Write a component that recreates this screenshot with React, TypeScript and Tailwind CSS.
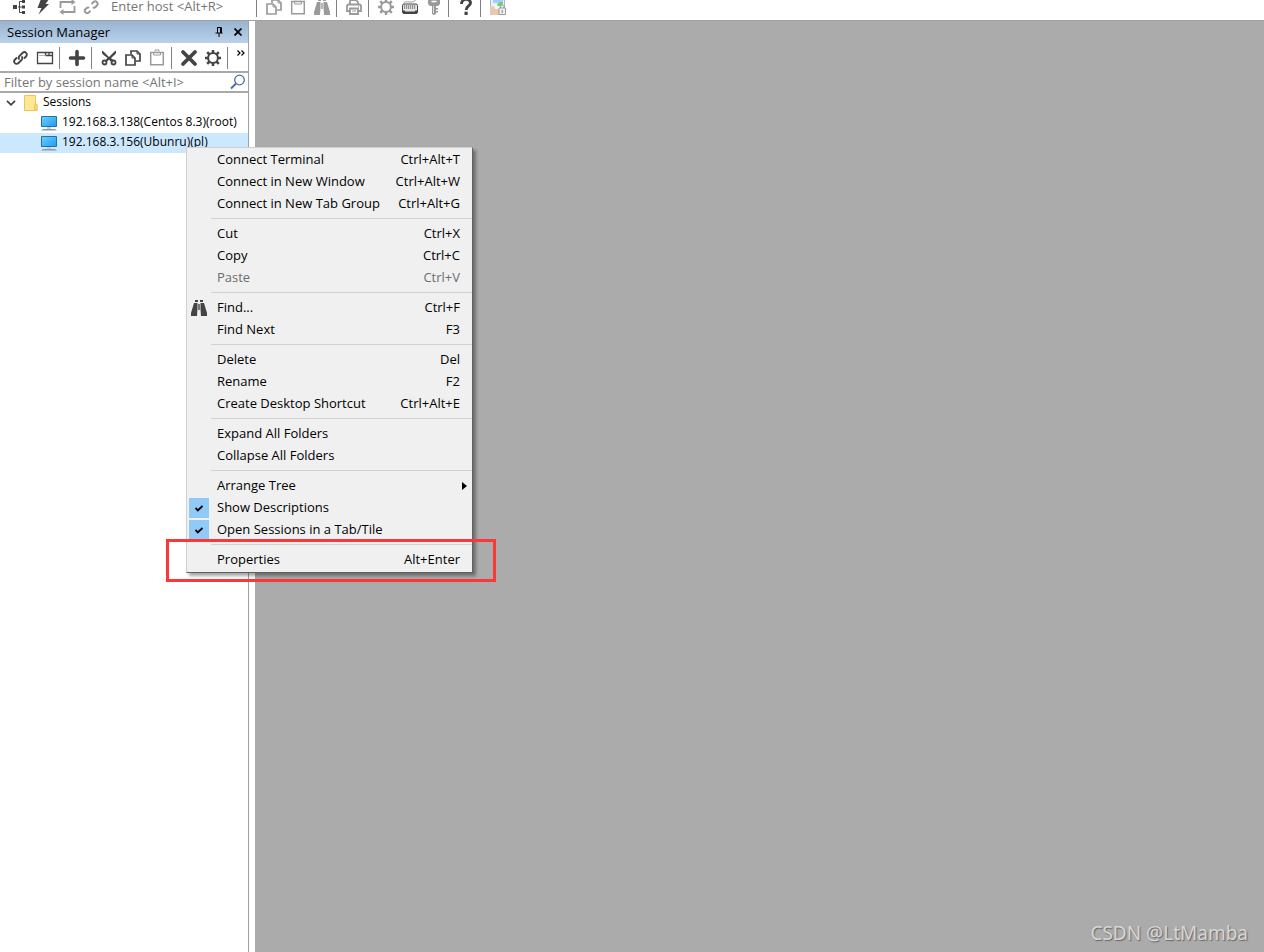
import type { ReactNode } from "react";

const DARK = "#444444";
const PALE = "#9a9a9a";

type IconProps = { color?: string };

function Glyph({ children }: { children: ReactNode }) {
  return (
    <svg viewBox="0 0 16 16" className="h-4 w-4 overflow-visible" fill="none" aria-hidden="true">
      {children}
    </svg>
  );
}

function TreeIcon() {
  return (
    <Glyph>
      <path d="M2 6h4v4H2zM11 1h3v3h-3zM11 6.500h3v3h-3zM11 12h3v3h-3z" fill={DARK} />
      <path d="M7 8h4M11 2.500H8.500v11H11" stroke={DARK} strokeWidth="1" />
    </Glyph>
  );
}

function BoltIcon() {
  return (
    <Glyph>
      <path d="M6 0h8L10.500 5H14L3.500 15.500 6.500 9H2.500z" fill={DARK} />
    </Glyph>
  );
}

function LoopIcon() {
  return (
    <Glyph>
      <path d="M1.500 9V3h12M15.500 7v6h-12" stroke={PALE} strokeWidth="1.800" />
      <path d="M12.500 0L16.500 3l-4 3zM4.500 10L.5 13l4 3z" fill={PALE} />
    </Glyph>
  );
}

function BrokenLinkIcon() {
  return (
    <Glyph>
      <path
        d="M8.500 5L10.500 3c2.200-2 5.500 1 3.500 3.500L12.500 8c-.8.800-1.800.8-2.800.3M6.300 8.700c-1-.5-2-.3-2.800.5L2.200 10.500C.5 12.500 3.800 15.500 5.800 13.500L7.500 11.800"
        stroke={PALE}
        strokeWidth="2"
      />
    </Glyph>
  );
}

function LinkIcon() {
  return (
    <Glyph>
      <path
        d="M6.500 9.500c-1-1-1-2.500 0-3.500l3-3c2.500-2.500 6 1 3.500 3.500l-2 2M8.500 6.500c1.200 1 1.200 2.500 0 3.500l-3 3c-2.500 2.500-6-1-3.500-3.500l2-2"
        stroke={DARK}
        strokeWidth="1.800"
      />
    </Glyph>
  );
}

function WindowIcon() {
  return (
    <Glyph>
      <path d="M.5 2.500h15v11H.5zM8.500 5.500h7M8.500 2.500v3M12 2.500v3" stroke={DARK} strokeWidth="1.300" />
      <path d="M2 5.500h6.500" stroke="#b5b5b5" />
    </Glyph>
  );
}

function PlusIcon() {
  return (
    <Glyph>
      <path d="M8 1.500v13M1.500 8h13" stroke={DARK} strokeWidth="3.600" strokeLinecap="round" />
    </Glyph>
  );
}

function CutIcon() {
  return (
    <Glyph>
      <path d="M1.500.5L8 7l6.500-6.500c1 1.500.5 3-.5 4L5.500 12 4 10.500 6.500 8 2 4.500C1 3.500.5 2 1.500.5z" fill={DARK} />
      <path d="M8 8l4 3.500" stroke={DARK} strokeWidth="2.500" />
      <circle cx="3.500" cy="12.500" r="2" stroke={DARK} strokeWidth="1.800" />
      <circle cx="12.500" cy="12.500" r="2" stroke={DARK} strokeWidth="1.800" />
    </Glyph>
  );
}

function CopyIcon({ color = PALE }: IconProps) {
  return (
    <Glyph>
      <path d="M6 4V1h6l3 3v7h-4" stroke={color} strokeWidth="1.700" />
      <path d="M12 1v3h3" stroke={color} />
      <path d="M1 5h6l3 3v7H1z" stroke={color} strokeWidth="1.700" />
      <path d="M7 5v3h3" stroke={color} />
    </Glyph>
  );
}

function PasteIcon() {
  return (
    <Glyph>
      <path d="M1.700 2.500h12.600v12.300H1.700z" stroke={PALE} strokeWidth="1.500" />
      <path d="M4.500 2V5h7V2M6 1.500V0h4v1.500" stroke={PALE} />
    </Glyph>
  );
}

function BinocularsIcon({ color = PALE }: IconProps) {
  return (
    <Glyph>
      <path d="M4 0h3v2H4zM9 0h3v2H9zM3 3h3.500v6L6 16H0v-3zM9.500 3H13l3 10v3h-6l-.5-7z" fill={color} />
      <path d="M7.300 4h1.400v6H7.300z" fill={color} />
    </Glyph>
  );
}

function PrinterIcon() {
  return (
    <Glyph>
      <path d="M4 5V1h6l2 2v2M4 12H1V6.500L2 5.500h12l1 1V12h-3M4 9.500h8V15H4z" stroke={PALE} strokeWidth="1.800" />
      <path d="M6 12h4M12 7.500h1" stroke={PALE} />
    </Glyph>
  );
}

function GearIcon({ color = PALE }: IconProps) {
  return (
    <Glyph>
      <circle cx="8" cy="8" r="4.900" stroke={color} strokeWidth="2" />
      <path
        d="M8 0v3M8 13v3M0 8h3M13 8h3M2.200 2.200l2.300 2.300M11.500 11.500l2.300 2.300M2.200 13.800l2.300-2.300M11.500 4.500l2.300-2.300"
        stroke={color}
        strokeWidth="2.500"
      />
    </Glyph>
  );
}

function KeyboardIcon() {
  return (
    <Glyph>
      <path d="M2 4.500C2 2 5 3 8 3s6-.5 6-4" stroke={PALE} />
      <rect x=".5" y="5" width="15" height="9.500" rx="1.500" fill="#e6e6e6" stroke={DARK} />
      <path d="M2 7h12M2 9h12" stroke={DARK} strokeWidth="1.100" strokeDasharray="1.200 .8" />
      <path d="M1 11.500h2v2H1zM13 11.500h2v2h-2zM1 12.500h14v2H1z" fill={DARK} />
    </Glyph>
  );
}

function KeyIcon() {
  return (
    <Glyph>
      <path d="M2 0h12v5l-2 2H4L2 5zM6 6h4v9l-2 1-2-1zM9 9h3v1.500H9zM9 12h3v1.500H9z" fill={PALE} />
      <path d="M5.500 2.500h5" stroke="white" strokeWidth="1.500" />
      <path d="M7.500 7v7" stroke="#dddddd" />
    </Glyph>
  );
}

function HelpIcon() {
  return (
    <Glyph>
      <path d="M3.500 5C3.500-1 12.500-1 12.500 4c0 3-4.300 3-4.300 7" stroke={DARK} strokeWidth="2.900" />
      <path d="M6.500 12.700h3.200V16H6.500z" fill={DARK} />
    </Glyph>
  );
}

function PictureLockIcon() {
  return (
    <Glyph>
      <path d="M.5-.5h14v11H.5z" fill="#e9f0fb" stroke="#a9b7cf" />
      <path d="M3 1h10v3H3z" fill="#a9c9ff" />
      <path d="M0 8l4-1 5 2v7H0z" fill="#e9c8ad" />
      <path d="M4 6h6v4H5z" fill="#f7f7f7" />
      <path d="M7 6c1-3 4-3 6-3 0 3-2 5-5 4z" fill="#66d36e" />
      <path d="M10.500 9V7.500c0-2 3.500-2 3.500 0V9" stroke="#999999" />
      <path d="M9 9h6.500v6.500H9z" fill="#f2f2f2" stroke="#999999" />
      <path d="M12.200 11v3" stroke="#777777" />
    </Glyph>
  );
}

function DeleteIcon() {
  return (
    <Glyph>
      <path d="M2 2l12 12M14 2L2 14" stroke={DARK} strokeWidth="3.800" strokeLinecap="round" />
    </Glyph>
  );
}

function ComputerIcon() {
  return (
    <svg viewBox="0 0 16 16" className="h-4 w-4 shrink-0" aria-hidden="true">
      <defs>
        <linearGradient id="screen" x1="0" y1="0" x2="1" y2="1">
          <stop offset="0" stopColor="#6dd0ff" />
          <stop offset="1" stopColor="#1b9df2" />
        </linearGradient>
      </defs>
      <path d="M.5 1.500h15v10H.5z" fill="url(#screen)" stroke="#2b7197" />
      <path d="M6 12h4v2H6z" fill="#c3d0da" />
      <path d="M2 14h12l2 1.500H0z" fill="#8e9caa" />
    </svg>
  );
}

function FolderIcon() {
  return (
    <svg viewBox="0 0 14 16" className="h-4 w-3.5" aria-hidden="true">
      <path d="M.5.500h11v9l1.500 1v5H.5z" fill="#ffe694" stroke="#e9c658" />
      <path d="M10.500 15v-5l2.500-1v6z" fill="#ffdc70" stroke="#e9c658" />
    </svg>
  );
}

function ToolButton({ label, children }: { label: string; children: ReactNode }) {
  return (
    <button type="button" aria-label={label} className="flex w-6 shrink-0 items-center justify-center">
      {children}
    </button>
  );
}

function Divider() {
  return (
    <div className="w-2 shrink-0 self-stretch pl-0.5">
      <div className="h-full w-px bg-[#808080]" />
    </div>
  );
}

function TopToolbar() {
  return (
    <header className="flex h-[21px] shrink-0 items-center overflow-hidden border-b border-[#a0a0a0] bg-white pl-[7px]">
      <div className="flex h-5 items-center pb-1.5">
        <ToolButton label="Sessions"><TreeIcon /></ToolButton>
        <ToolButton label="Quick connect"><BoltIcon /></ToolButton>
        <ToolButton label="Reconnect"><LoopIcon /></ToolButton>
        <ToolButton label="Disconnect"><BrokenLinkIcon /></ToolButton>
        <input
          aria-label="Host"
          placeholder="Enter host <Alt+R>"
          className="h-5 w-[151px] bg-transparent pb-0.5 pl-2 outline-none placeholder:text-[#757575]"
        />
      </div>
      <div className="flex h-[17px] items-center self-start">
        <Divider />
        <div className="flex pb-[3px]">
          <ToolButton label="Copy"><CopyIcon /></ToolButton>
          <ToolButton label="Paste"><PasteIcon /></ToolButton>
          <ToolButton label="Find"><BinocularsIcon /></ToolButton>
        </div>
        <Divider />
        <div className="flex pb-[3px]">
          <ToolButton label="Print"><PrinterIcon /></ToolButton>
        </div>
        <Divider />
        <div className="flex pb-[3px]">
          <ToolButton label="Options"><GearIcon /></ToolButton>
          <ToolButton label="Keyboard"><KeyboardIcon /></ToolButton>
          <ToolButton label="Keys"><KeyIcon /></ToolButton>
        </div>
        <Divider />
        <div className="flex pb-[3px]">
          <ToolButton label="Help"><HelpIcon /></ToolButton>
        </div>
        <Divider />
        <div className="flex pb-[3px]">
          <ToolButton label="Secure transfer"><PictureLockIcon /></ToolButton>
        </div>
      </div>
    </header>
  );
}

function SessionRow({ name, selected }: { name: string; selected?: boolean }) {
  return (
    <li
      role="treeitem"
      aria-selected={!!selected}
      className={`flex h-5 items-center gap-[5px] pl-[41px] whitespace-nowrap ${selected ? "bg-[#cce8ff]" : ""}`}
    >
      <ComputerIcon />
      <span className="pb-0.5">{name}</span>
    </li>
  );
}

function SessionManager() {
  return (
    <aside className="flex w-[249px] shrink-0 flex-col border-r border-[#a0a0a0] bg-white">
      <div className="flex h-[22px] items-center bg-linear-to-b from-[#99b4d1] to-[#b9d1ea] pl-[7px]">
        <h1 className="flex-1">Session Manager</h1>
        <button type="button" aria-label="Pin" className="flex w-[18px] justify-center">
          <svg viewBox="0 0 8 10" className="h-2.5 w-2" fill="none" stroke="black" aria-hidden="true">
            <path d="M2 .500h4.500V6M2.500 0v6M.5 6h7M4 6v4M5.500 1v5" />
          </svg>
        </button>
        <button type="button" aria-label="Close" className="flex w-5 justify-center">
          <svg viewBox="0 0 8 8" className="h-2 w-2" fill="none" stroke="black" strokeWidth="1.800" aria-hidden="true">
            <path d="M.5.500l7 7M7.500.500l-7 7" />
          </svg>
        </button>
      </div>

      <div className="flex h-7 items-center pt-1 pb-0.5 pl-[9px]">
        <ToolButton label="Connect"><LinkIcon /></ToolButton>
        <ToolButton label="Connect in tab"><WindowIcon /></ToolButton>
        <Divider />
        <ToolButton label="New session"><PlusIcon /></ToolButton>
        <Divider />
        <ToolButton label="Cut"><CutIcon /></ToolButton>
        <ToolButton label="Copy"><CopyIcon color={DARK} /></ToolButton>
        <ToolButton label="Paste"><PasteIcon /></ToolButton>
        <Divider />
        <ToolButton label="Delete"><DeleteIcon /></ToolButton>
        <ToolButton label="Properties"><GearIcon color={DARK} /></ToolButton>
        <Divider />
        <button type="button" aria-label="More" className="flex w-[18px] justify-center self-start pt-[3px]">
          <svg viewBox="0 0 8 6" className="h-1.5 w-2" fill="none" stroke="black" strokeWidth="1.200" aria-hidden="true">
            <path d="M.5.500L3 3 .5 5.500M4.500.500L7 3 4.500 5.500" />
          </svg>
        </button>
      </div>

      <div className="flex h-[22px] items-center border-y-2 border-[#a9a9a9] pr-0.5 pl-1">
        <input
          aria-label="Filter by session name"
          placeholder="Filter by session name <Alt+I>"
          className="min-w-0 flex-1 bg-transparent outline-none placeholder:text-[#757575]"
        />
        <svg viewBox="0 0 16 16" className="h-4 w-4" fill="none" stroke="#4a6ba8" aria-hidden="true">
          <circle cx="9.500" cy="6" r="4.800" strokeWidth="1.300" />
          <path d="M6 9.500L1 14.500" strokeWidth="2" />
        </svg>
      </div>

      <ul role="tree" aria-label="Sessions" className="text-xs">
        <li role="treeitem" aria-expanded="true" className="flex h-5 items-center pl-1.5">
          <svg viewBox="0 0 10 6" className="mr-2 h-1.5 w-2.5" fill="none" stroke="#404040" strokeWidth="1.700" aria-hidden="true">
            <path d="M1 .8l4 4 4-4" />
          </svg>
          <FolderIcon />
          <span className="pb-0.5 pl-[5px]">Sessions</span>
        </li>
        <SessionRow name="192.168.3.138(Centos 8.3)(root)" />
        <SessionRow name="192.168.3.156(Ubunru)(pl)" selected />
      </ul>
    </aside>
  );
}

type Entry = {
  label: string;
  keys?: string;
  disabled?: boolean;
  checked?: boolean;
  submenu?: boolean;
  find?: boolean;
};

const groups: Entry[][] = [
  [
    { label: "Connect Terminal", keys: "Ctrl+Alt+T" },
    { label: "Connect in New Window", keys: "Ctrl+Alt+W" },
    { label: "Connect in New Tab Group", keys: "Ctrl+Alt+G" },
  ],
  [
    { label: "Cut", keys: "Ctrl+X" },
    { label: "Copy", keys: "Ctrl+C" },
    { label: "Paste", keys: "Ctrl+V", disabled: true },
  ],
  [
    { label: "Find...", keys: "Ctrl+F", find: true },
    { label: "Find Next", keys: "F3" },
  ],
  [
    { label: "Delete", keys: "Del" },
    { label: "Rename", keys: "F2" },
    { label: "Create Desktop Shortcut", keys: "Ctrl+Alt+E" },
  ],
  [{ label: "Expand All Folders" }, { label: "Collapse All Folders" }],
  [
    { label: "Arrange Tree", submenu: true },
    { label: "Show Descriptions", checked: true },
    { label: "Open Sessions in a Tab/Tile", checked: true },
  ],
  [{ label: "Properties", keys: "Alt+Enter" }],
];

function MenuRow({ entry }: { entry: Entry }) {
  return (
    <button
      type="button"
      role={entry.checked ? "menuitemcheckbox" : "menuitem"}
      aria-checked={entry.checked}
      disabled={entry.disabled}
      className={`flex h-[22px] w-full items-center pl-0.5 whitespace-nowrap ${entry.disabled ? "text-[#6d6d6d]" : "text-black"}`}
    >
      <span className={`mr-2 flex h-5 w-5 items-center justify-center ${entry.checked ? "bg-[#91c9f7]" : ""}`}>
        {entry.find && <BinocularsIcon color={DARK} />}
        {entry.checked && (
          <svg viewBox="0 0 8 7" className="h-[7px] w-2" fill="none" stroke="black" strokeWidth="1.900" aria-hidden="true">
            <path d="M.5 3l2.300 2.500L7.500 1" />
          </svg>
        )}
      </span>
      <span className="flex-1 pb-0.5 text-left">{entry.label}</span>
      {entry.keys && <span className="pr-3 pb-0.5">{entry.keys}</span>}
      {entry.submenu && (
        <svg viewBox="0 0 5 8" className="mr-[5px] h-2 w-[5px]" aria-hidden="true">
          <path d="M0 0l5 4-5 4z" fill="black" />
        </svg>
      )}
    </button>
  );
}

function ContextMenu() {
  return (
    <div
      role="menu"
      className="absolute top-[147px] left-[186px] w-[287px] border border-t-[#d0d0d0] border-r-[#606060] border-b-[#606060] border-l-[#d0d0d0] bg-[#f0f0f0] py-px shadow-[3px_3px_3px_rgba(0,0,0,0.35)]"
    >
      {groups.map((group, index) => (
        <div key={group[0].label} role="group">
          {index > 0 && (
            <div className="h-2 pt-[3px] pl-6">
              <div className="h-px bg-[#d2d2d2]" />
            </div>
          )}
          {group.map((entry) => (
            <MenuRow key={entry.label} entry={entry} />
          ))}
        </div>
      ))}
    </div>
  );
}

export default function App() {
  return (
    <div className="relative flex min-h-screen flex-col overflow-hidden bg-white font-['Open_Sans','Noto_Sans',sans-serif] text-[13px] leading-5 text-black">
      <TopToolbar />
      <div className="flex flex-1 gap-1.5">
        <SessionManager />
        <main className="flex flex-1 items-end justify-end bg-[#ababab] pr-4 pb-1.5">
          <p className="font-['Noto_Sans',sans-serif] text-[19px] leading-[26px] text-[#d6d6d6] [text-shadow:1px_1px_1px_#666]">
            CSDN @LtMamba
          </p>
        </main>
      </div>
      <ContextMenu />
      <div className="pointer-events-none absolute top-[539px] left-[166px] h-[43px] w-[330px] border-3 border-[#fc3737]" />
    </div>
  );
}
